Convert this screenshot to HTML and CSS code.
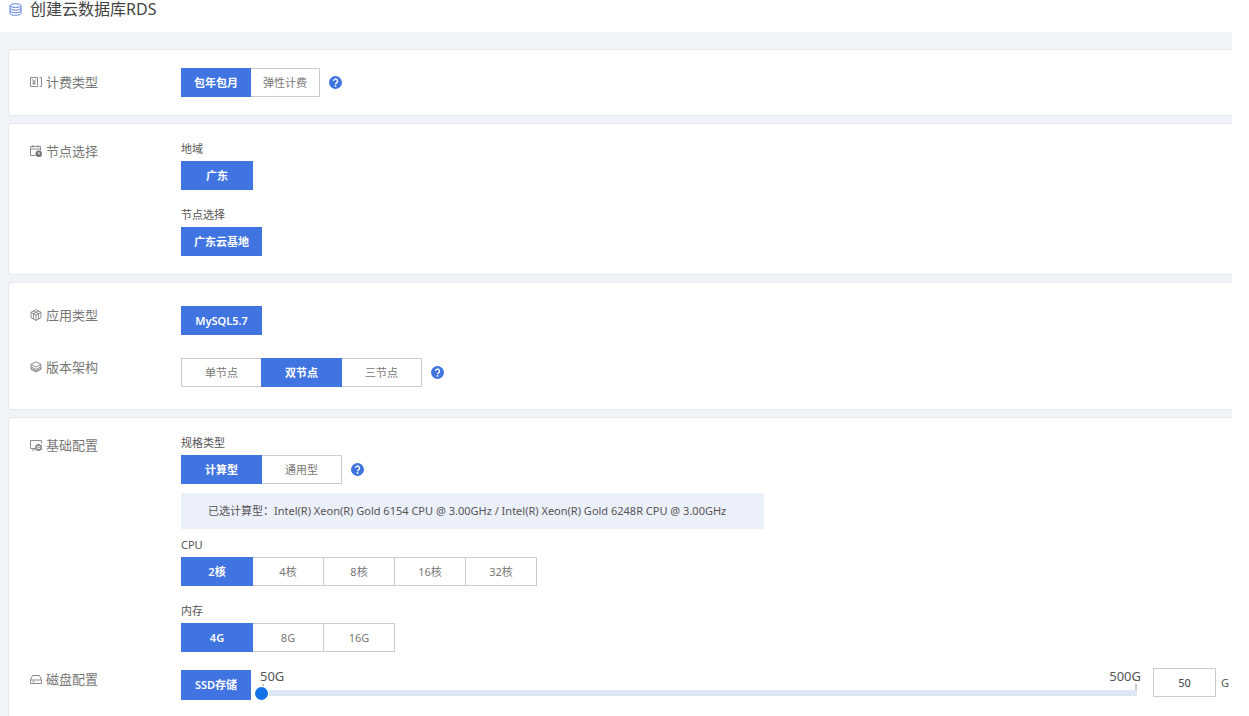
FILE: index.html
```html
<!DOCTYPE html>
<html lang="zh-CN">
<head>
<meta charset="utf-8">
<title>创建云数据库RDS</title>
<link rel="stylesheet" href="styles.css">
</head>
<body>
<svg class="defs" aria-hidden="true">
  <symbol id="help" viewBox="0 0 13 13">
    <circle cx="6.500" cy="6.500" r="6.500" fill="#4074e1"/>
    <path d="M4.500 5.100a2 2 0 1 1 3 1.700c-.7.400-1 .7-1 1.400" fill="none" stroke="#fff" stroke-width="1.400"/>
    <circle cx="6.500" cy="9.900" r=".9" fill="#fff"/>
  </symbol>
</svg>
<header class="page-head">
  <svg class="page-icon" viewBox="0 0 13 13"><ellipse cx="6.500" cy="2.600" rx="5.500" ry="1.900"/><path d="M1 2.600v7.800c0 2.500 11 2.500 11 0V2.600M1 5.200c0 2.500 11 2.500 11 0M1 7.800c0 2.500 11 2.500 11 0"/></svg>
  <h1>创建云数据库RDS</h1>
</header>
<main class="page">
  <section class="card">
    <div class="row">
      <h2 class="row-label tall"><svg class="icon" viewBox="0 0 12 12"><path d="M.5 1.500h7v9h-7zM9.500 1.500h2v9h-2M2.200 3.200 4 5.500l1.800-2.300M4 5.500v3.500M2.500 6h3M2.500 7.500h3"/></svg>计费类型</h2>
      <div class="row-body line">
        <div class="seg"><button class="opt on">包年包月</button><button class="opt">弹性计费</button></div>
        <button class="help" aria-label="帮助"><svg><use href="#help"/></svg></button>
      </div>
    </div>
  </section>

  <section class="card">
    <div class="row">
      <h2 class="row-label"><svg class="icon" viewBox="0 0 12 12"><path d="M5.500 10.500h-5v-9h10v4M.5 4h10M3 0v2.500M8 0v2.500"/><circle cx="8.800" cy="8.800" r="3" class="solid"/><path class="light" d="M8.800 7v2h1.500"/></svg>节点选择</h2>
      <div class="row-body stack">
        <div class="field"><h3>地域</h3><div class="seg mid"><button class="opt on">广东</button></div></div>
        <div class="field"><h3>节点选择</h3><div class="seg"><button class="opt on">广东云基地</button></div></div>
      </div>
    </div>
  </section>

  <section class="card roomy">
    <div class="row">
      <h2 class="row-label"><svg class="icon" viewBox="0 0 12 12"><path d="M6 .6l5 2.700v5.400l-5 2.700-5-2.700V3.300zM1 3.300l5 2.700 5-2.700M6 6v5.400M3.500 2l5 2.700M8.500 2l-5 2.700M3.500 4.700v5.300M8.500 4.700v5.300"/></svg>应用类型</h2>
      <div class="row-body"><div class="seg wide"><button class="opt on">MySQL5.7</button></div></div>
    </div>
    <div class="row">
      <h2 class="row-label"><svg class="icon" viewBox="0 0 12 12"><path d="M6 .8l5 2.600-5 2.600-5-2.600zM1 3.400v5L6 11l5-2.600v-5M1 5.900l5 2.600 5-2.600M1 7.400l5 2.600 5-2.600"/></svg>版本架构</h2>
      <div class="row-body line">
        <div class="seg wide"><button class="opt">单节点</button><button class="opt on">双节点</button><button class="opt">三节点</button></div>
        <button class="help" aria-label="帮助"><svg><use href="#help"/></svg></button>
      </div>
    </div>
  </section>

  <section class="card last">
    <div class="row">
      <h2 class="row-label"><svg class="icon" viewBox="0 0 12 12"><path d="M11.500 4.500v-3H.5v8H5M2 11h3"/><path class="bold" d="M8.500 5.500l2.600 1.500v3l-2.600 1.500L5.900 10V7z"/><circle cx="8.500" cy="8.500" r=".8"/></svg>基础配置</h2>
      <div class="row-body stack">
        <div>
          <div class="field">
            <h3>规格类型</h3>
            <div class="line">
              <div class="seg wide"><button class="opt on">计算型</button><button class="opt">通用型</button></div>
              <button class="help" aria-label="帮助"><svg><use href="#help"/></svg></button>
            </div>
          </div>
          <p class="note">已选计算型：Intel(R) Xeon(R) Gold 6154 CPU @ 3.00GHz / Intel(R) Xeon(R) Gold 6248R CPU @ 3.00GHz</p>
          <div class="field">
            <h3>CPU</h3>
            <div class="seg mid"><button class="opt on">2核</button><button class="opt">4核</button><button class="opt">8核</button><button class="opt">16核</button><button class="opt">32核</button></div>
          </div>
        </div>
        <div class="field">
          <h3>内存</h3>
          <div class="seg mid"><button class="opt on">4G</button><button class="opt">8G</button><button class="opt">16G</button></div>
        </div>
      </div>
    </div>
    <div class="row disk">
      <h2 class="row-label"><svg class="icon" viewBox="0 0 12 12"><path d="M2.500 2.500h7l2 4.500v3.500H.5V7zM.5 7h11M2.500 8.800h2"/></svg>磁盘配置</h2>
      <div class="row-body line">
        <div class="seg"><button class="opt on">SSD存储</button></div>
        <div class="slider">
          <div class="scale"><span>50G</span><span>500G</span></div>
          <div class="ticks"></div>
          <input type="range" min="50" max="500" value="50" aria-label="磁盘容量">
        </div>
        <label class="size"><input type="text" value="50" aria-label="容量"><span>G</span></label>
      </div>
    </div>
  </section>
</main>
</body>
</html>
```
FILE: styles.css
```css
* {
  box-sizing: border-box;
}

body {
  margin: 0 17px 0 0;
  background: #fff;
  color: #555;
  font: 11px/14px "Noto Sans", "Noto Sans CJK SC", sans-serif;
  overflow: hidden;
}

h1, h2, h3, p {
  margin: 0;
  font-weight: 400;
}

button, input {
  margin: 0;
  font: inherit;
}

.defs {
  display: none;
}

.page-head {
  display: flex;
  gap: 8px;
  height: 32px;
  padding-left: 9px;
}

.page-head h1 {
  color: #444;
  font-size: 16px;
  line-height: 18px;
}

.page-icon {
  width: 13px;
  height: 13px;
  margin-top: 3px;
  fill: none;
  stroke: #5b80e0;
}

.page {
  display: flex;
  flex-direction: column;
  gap: 7px;
  padding: 17px 0 0 8px;
  background: #f0f3f8;
}

.card {
  display: flex;
  flex-direction: column;
  gap: 23px;
  padding: 18px 0 18px 21px;
  border: 1px solid #e6e8ec;
  border-right: 0;
  border-radius: 4px 0 0 4px;
  background: #fff;
}

.card.roomy {
  padding-top: 23px;
  padding-bottom: 22px;
}

.card.last {
  gap: 16px;
  padding-bottom: 32px;
}

.row {
  display: flex;
  align-items: flex-start;
}

.row-label {
  display: flex;
  flex: none;
  align-items: center;
  gap: 4px;
  width: 151px;
  color: #777;
  font-size: 13px;
  line-height: 18px;
}

.row-label.tall {
  line-height: 28px;
}

.icon {
  width: 12px;
  height: 12px;
  fill: none;
  stroke: #808080;
  stroke-width: 0.9;
}

.icon .solid {
  fill: #707070;
}

.icon .light {
  stroke: #fff;
}

.icon .bold {
  stroke-width: 1.5;
}

.row-body {
  flex: 1;
}

.line {
  display: flex;
  align-items: center;
  gap: 9px;
}

.stack {
  display: flex;
  flex-direction: column;
  gap: 18px;
}

.field {
  display: flex;
  flex-direction: column;
  gap: 5px;
}

.field h3 {
  font-size: 11px;
}

.seg {
  display: flex;
}

.opt {
  min-width: 70px;
  height: 29px;
  padding: 0 12px;
  border: 1px solid #ccc;
  background: #fff;
  color: #777;
  white-space: nowrap;
}

.opt + .opt {
  margin-left: -1px;
}

.mid .opt {
  min-width: 72px;
}

.wide .opt {
  min-width: 81px;
}

.opt.on {
  z-index: 1;
  border-color: #4074e1;
  background: #4074e1;
  color: #fff;
  font-weight: 600;
}

.help {
  width: 13px;
  height: 13px;
  padding: 0;
  border: 0;
  background: none;
}

.help svg {
  display: block;
  width: 13px;
  height: 13px;
}

.note {
  width: fit-content;
  margin: 9px 0;
  padding: 11px 38px 11px 27px;
  background: #ecf0fb;
}

.disk .row-label {
  padding-top: 2px;
}

.disk .line {
  align-items: flex-start;
  gap: 4px;
}

.disk .seg {
  padding-top: 2px;
}

.disk .opt {
  height: 30px;
  padding: 0 8px;
}

.slider {
  flex: 1;
}

.scale {
  display: flex;
  justify-content: space-between;
  margin: 0 -4px 0 5px;
  font-size: 13px;
  line-height: 16px;
}

.ticks {
  height: 6px;
  margin-left: 7px;
  border: solid #ccc;
  border-width: 0 2px;
}

.slider input {
  display: block;
  width: 100%;
  height: 6px;
  appearance: none;
  background: #dde7f4;
}

.slider input::-webkit-slider-thumb {
  width: 13px;
  height: 13px;
  appearance: none;
  border-radius: 50%;
  background: #1371e8;
  box-shadow: 0 0 0 1px #fff;
}

.size {
  display: flex;
  align-items: center;
  gap: 5px;
  margin: 0 3px 0 12px;
}

.size input {
  width: 63px;
  height: 29px;
  padding: 0;
  border: 1px solid #ccc;
  color: #444;
  text-align: center;
}
```
